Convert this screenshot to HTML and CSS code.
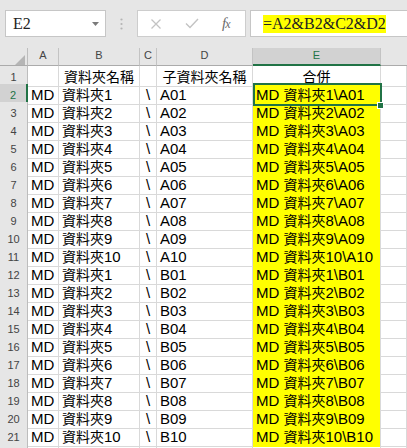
FILE: index.html
```html
<!DOCTYPE html>
<html lang="zh-Hant">
<head>
<meta charset="utf-8">
<title>Excel</title>
<link rel="stylesheet" href="styles.css">
</head>
<body>
<div class="topbar">
  <div class="namebox"><span>E2</span><svg class="arrow" width="7" height="4" viewBox="0 0 7 4"><path d="M0 0H7L3.5 4Z" fill="#7a7a7a"/></svg></div>
  <div class="dots"><svg width="3" height="12" viewBox="0 0 3 12"><circle cx="1.5" cy="1.5" r="1.1" fill="#b4b4b4"/><circle cx="1.5" cy="6" r="1.1" fill="#b4b4b4"/><circle cx="1.5" cy="10.5" r="1.1" fill="#b4b4b4"/></svg></div>
  <div class="fxbtns">
    <svg class="xbtn" width="12" height="10" viewBox="0 0 12 10"><path d="M1.5 0.5L10.5 9.5M10.5 0.5L1.5 9.5" stroke="#c3c3c3" stroke-width="1.3" fill="none"/></svg>
    <svg class="okbtn" width="14" height="11" viewBox="0 0 14 11"><path d="M1 5.5L5 9.5L13 1" stroke="#c3c3c3" stroke-width="1.4" fill="none"/></svg>
    <span class="fx">f<span class="fxx">x</span></span>
  </div>
  <div class="formula"><span class="ftext">=A2&amp;B2&amp;C2&amp;D2</span></div>
</div>

<div class="sheet">
  <div class="row">
    <div class="corner"><svg width="10" height="10" viewBox="0 0 10 10"><path d="M10 0V10H0Z" fill="#b5b5b5"/></svg></div>
    <div class="ch">A</div><div class="ch">B</div><div class="ch">C</div><div class="ch">D</div><div class="ch sel">E</div><div class="ch end"></div>
  </div>
  <div class="row">
    <div class="rh">1</div><div class="c"></div><div class="c ctr"><span class="cj">資料夾名稱</span></div><div class="c"></div><div class="c ctr"><span class="cj">子資料夾名稱</span></div><div class="c ctr"><span class="cj">合併</span></div><div class="c"></div>
  </div>
  <div class="row">
    <div class="rh sel">2</div><div class="c">MD</div><div class="c"><span class="cj">資料夾</span>1</div><div class="c bs">\</div><div class="c">A01</div><div class="c y active">MD <span class="cj">資料夾</span>1\A01<div class="selbox"></div><div class="handle"></div></div><div class="c"></div>
  </div>
  <div class="row">
    <div class="rh">3</div><div class="c">MD</div><div class="c"><span class="cj">資料夾</span>2</div><div class="c bs">\</div><div class="c">A02</div><div class="c y">MD <span class="cj">資料夾</span>2\A02</div><div class="c"></div>
  </div>
  <div class="row">
    <div class="rh">4</div><div class="c">MD</div><div class="c"><span class="cj">資料夾</span>3</div><div class="c bs">\</div><div class="c">A03</div><div class="c y">MD <span class="cj">資料夾</span>3\A03</div><div class="c"></div>
  </div>
  <div class="row">
    <div class="rh">5</div><div class="c">MD</div><div class="c"><span class="cj">資料夾</span>4</div><div class="c bs">\</div><div class="c">A04</div><div class="c y">MD <span class="cj">資料夾</span>4\A04</div><div class="c"></div>
  </div>
  <div class="row">
    <div class="rh">6</div><div class="c">MD</div><div class="c"><span class="cj">資料夾</span>5</div><div class="c bs">\</div><div class="c">A05</div><div class="c y">MD <span class="cj">資料夾</span>5\A05</div><div class="c"></div>
  </div>
  <div class="row">
    <div class="rh">7</div><div class="c">MD</div><div class="c"><span class="cj">資料夾</span>6</div><div class="c bs">\</div><div class="c">A06</div><div class="c y">MD <span class="cj">資料夾</span>6\A06</div><div class="c"></div>
  </div>
  <div class="row">
    <div class="rh">8</div><div class="c">MD</div><div class="c"><span class="cj">資料夾</span>7</div><div class="c bs">\</div><div class="c">A07</div><div class="c y">MD <span class="cj">資料夾</span>7\A07</div><div class="c"></div>
  </div>
  <div class="row">
    <div class="rh">9</div><div class="c">MD</div><div class="c"><span class="cj">資料夾</span>8</div><div class="c bs">\</div><div class="c">A08</div><div class="c y">MD <span class="cj">資料夾</span>8\A08</div><div class="c"></div>
  </div>
  <div class="row">
    <div class="rh">10</div><div class="c">MD</div><div class="c"><span class="cj">資料夾</span>9</div><div class="c bs">\</div><div class="c">A09</div><div class="c y">MD <span class="cj">資料夾</span>9\A09</div><div class="c"></div>
  </div>
  <div class="row">
    <div class="rh">11</div><div class="c">MD</div><div class="c"><span class="cj">資料夾</span>10</div><div class="c bs">\</div><div class="c">A10</div><div class="c y">MD <span class="cj">資料夾</span>10\A10</div><div class="c"></div>
  </div>
  <div class="row">
    <div class="rh">12</div><div class="c">MD</div><div class="c"><span class="cj">資料夾</span>1</div><div class="c bs">\</div><div class="c">B01</div><div class="c y">MD <span class="cj">資料夾</span>1\B01</div><div class="c"></div>
  </div>
  <div class="row">
    <div class="rh">13</div><div class="c">MD</div><div class="c"><span class="cj">資料夾</span>2</div><div class="c bs">\</div><div class="c">B02</div><div class="c y">MD <span class="cj">資料夾</span>2\B02</div><div class="c"></div>
  </div>
  <div class="row">
    <div class="rh">14</div><div class="c">MD</div><div class="c"><span class="cj">資料夾</span>3</div><div class="c bs">\</div><div class="c">B03</div><div class="c y">MD <span class="cj">資料夾</span>3\B03</div><div class="c"></div>
  </div>
  <div class="row">
    <div class="rh">15</div><div class="c">MD</div><div class="c"><span class="cj">資料夾</span>4</div><div class="c bs">\</div><div class="c">B04</div><div class="c y">MD <span class="cj">資料夾</span>4\B04</div><div class="c"></div>
  </div>
  <div class="row">
    <div class="rh">16</div><div class="c">MD</div><div class="c"><span class="cj">資料夾</span>5</div><div class="c bs">\</div><div class="c">B05</div><div class="c y">MD <span class="cj">資料夾</span>5\B05</div><div class="c"></div>
  </div>
  <div class="row">
    <div class="rh">17</div><div class="c">MD</div><div class="c"><span class="cj">資料夾</span>6</div><div class="c bs">\</div><div class="c">B06</div><div class="c y">MD <span class="cj">資料夾</span>6\B06</div><div class="c"></div>
  </div>
  <div class="row">
    <div class="rh">18</div><div class="c">MD</div><div class="c"><span class="cj">資料夾</span>7</div><div class="c bs">\</div><div class="c">B07</div><div class="c y">MD <span class="cj">資料夾</span>7\B07</div><div class="c"></div>
  </div>
  <div class="row">
    <div class="rh">19</div><div class="c">MD</div><div class="c"><span class="cj">資料夾</span>8</div><div class="c bs">\</div><div class="c">B08</div><div class="c y">MD <span class="cj">資料夾</span>8\B08</div><div class="c"></div>
  </div>
  <div class="row">
    <div class="rh">20</div><div class="c">MD</div><div class="c"><span class="cj">資料夾</span>9</div><div class="c bs">\</div><div class="c">B09</div><div class="c y">MD <span class="cj">資料夾</span>9\B09</div><div class="c"></div>
  </div>
  <div class="row">
    <div class="rh">21</div><div class="c">MD</div><div class="c"><span class="cj">資料夾</span>10</div><div class="c bs">\</div><div class="c">B10</div><div class="c y">MD <span class="cj">資料夾</span>10\B10</div><div class="c"></div>
  </div>
  <div class="row">
    <div class="rh"></div><div class="c"></div><div class="c"></div><div class="c"></div><div class="c"></div><div class="c"></div><div class="c"></div>
  </div>
</div>
</body>
</html>
```

FILE: styles.css
```css
* { box-sizing: border-box; }
html, body { margin: 0; padding: 0; }
body {
  width: 407px;
  height: 448px;
  overflow: hidden;
  background: #fff;
  color: #000;
  font-family: "Liberation Sans", Arial, "Noto Sans CJK TC", sans-serif;
}

/* ---------- formula bar ---------- */
.topbar {
  height: 48px;
  background: #e6e6e6;
  display: flex;
  align-items: flex-start;
  padding: 10px 0 0 5px;
}
.namebox {
  width: 101px;
  height: 27px;
  background: #fff;
  border: 1px solid #c6c6c6;
  display: flex;
  align-items: center;
  padding: 0 6px 0 7px;
  font: 16px "Liberation Serif", serif;
  color: #222;
}
.namebox .arrow { margin-left: auto; }
.dots {
  width: 31px;
  height: 27px;
  display: flex;
  align-items: center;
  justify-content: center;
}
.fxbtns {
  width: 109px;
  height: 27px;
  background: #fff;
  border: 1px solid #cdcdcd;
  display: flex;
  align-items: center;
  padding-left: 12px;
}
.okbtn { margin-left: 23px; }
.fx {
  margin-left: 23px;
  font: italic 15px "Liberation Serif", serif;
  color: #6b6b6b;
  letter-spacing: -1px;
}
.fxx { font-size: 12px; }
.formula {
  flex: 1;
  height: 27px;
  margin-left: 4px;
  background: #fff;
  border: 1px solid #c6c6c6;
  border-right: none;
  display: flex;
  align-items: center;
  padding-left: 12px;
  font: 16px "Liberation Serif", serif;
  color: #222;
}
.ftext { background: #ffff00; }

/* ---------- sheet ---------- */
.row {
  display: grid;
  grid-template-columns: 28px 31px 81px 17px 96px 128px 1fr;
  height: 18px;
}
.corner {
  background: #e6e6e6;
  border-right: 1px solid #bdbdbd;
  border-bottom: 1px solid #ababab;
  display: flex;
  align-items: flex-end;
  justify-content: flex-end;
  padding-right: 2px;
}
.ch {
  background: #e6e6e6;
  border-right: 1px solid #c3c3c3;
  border-bottom: 1px solid #ababab;
  font-size: 11px;
  line-height: 14px;
  text-align: center;
  color: #444;
}
.ch.end { border-right: none; }
.ch.sel {
  background: #d2d2d2;
  border-bottom: 2px solid #217346;
  color: #217346;
}
.rh {
  background: #e6e6e6;
  border-right: 1px solid #bdbdbd;
  border-bottom: 1px solid #d0d0d0;
  font-size: 11px;
  line-height: 17px;
  padding-top: 3px;
  text-align: center;
  color: #444;
}
.rh.sel {
  background: #d2d2d2;
  border-right: 2px solid #217346;
  color: #217346;
}
.c {
  border-right: 1px solid #d9d9d9;
  border-bottom: 1px solid #d9d9d9;
  padding: 2px 0 0 3px;
  font-size: 15px;
  line-height: 17px;
  white-space: nowrap;
}
.ctr { text-align: center; padding-left: 0; }
.bs { padding-left: 6px; }
.cj {
  font-family: "Noto Sans CJK TC", sans-serif;
  font-size: 14px;
  line-height: 1;
}
.y {
  background: #ffff00;
  border-bottom-color: #ffff00;
}
.active { position: relative; }
.selbox {
  position: absolute;
  top: -1px;
  left: 0;
  right: -2px;
  bottom: -2px;
  border: 2px solid #217346;
}
.handle {
  position: absolute;
  right: -4px;
  bottom: -5px;
  width: 7px;
  height: 7px;
  background: #217346;
  border: 1px solid #fff;
}
```
